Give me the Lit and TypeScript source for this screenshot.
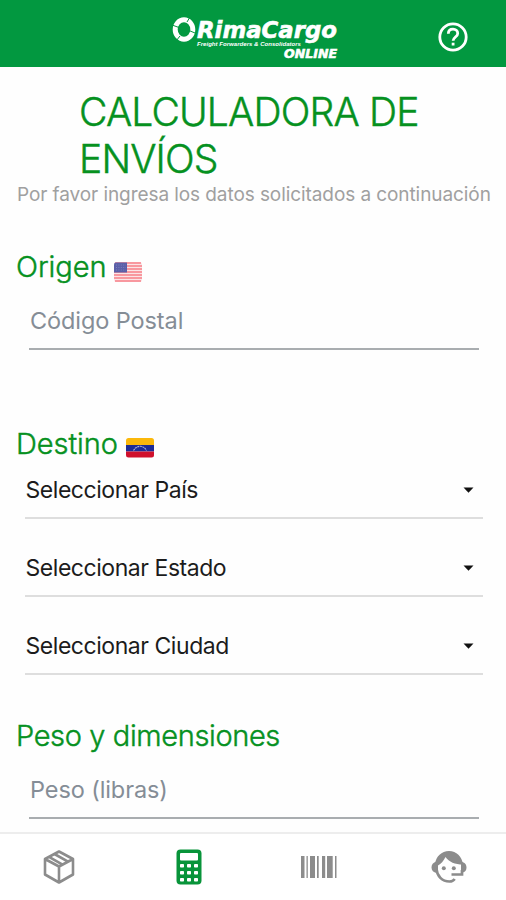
import { LitElement, html, svg, css } from "lit";
import { customElement, property } from "lit/decorators.js";

@customElement("brand-logo")
class BrandLogo extends LitElement {
  static styles = css`
    :host { display: block; width: 174px; height: 50px; }
    svg { display: block; overflow: visible; }
    text { fill: #fff; font-family: "DejaVu Sans", sans-serif; font-weight: 700; font-style: italic; }
    .name { font-size: 23.5px; stroke: #fff; stroke-width: 0.6; }
    .tag { font-size: 5.8px; font-family: "Liberation Sans", sans-serif; }
    .online { font-size: 12.5px; stroke: #fff; stroke-width: 0.6; }
  `;
  render() {
    return html`<svg width="174" height="50" viewBox="0 0 174 50">
      <ellipse cx="18" cy="17.5" rx="8.8" ry="9.8" fill="none" stroke="#fff" stroke-width="5" />
      <path d="M6 13l7 2.5M24 5l-3 5M29 21l-6-2.5M10 29l4-5" stroke="#029840" stroke-width="1" fill="none" />
      <text class="name" x="31" y="26" textLength="140" lengthAdjust="spacingAndGlyphs">RimaCargo</text>
      <text class="tag" x="31" y="33.5" textLength="104" lengthAdjust="spacingAndGlyphs">Freight Forwarders &amp; Consolidators</text>
      <text class="online" x="118" y="46" textLength="53" lengthAdjust="spacingAndGlyphs">ONLINE</text>
    </svg>`;
  }
}

@customElement("select-row")
class SelectRow extends LitElement {
  @property() label = "";
  static styles = css`
    :host {
      display: flex; align-items: center; justify-content: space-between;
      box-sizing: border-box; height: 58px; margin: 0 23px 20px 25px; padding: 2px 9px 0 0.5px;
      border-bottom: 2px solid #dedede; color: #1c1c1c; font-size: 23px; letter-spacing: -0.45px;
    }
    svg { display: block; }
  `;
  render() {
    return html`<span>${this.label}</span>
      <svg width="11" height="6" viewBox="0 0 11 6"><path d="M.5 .5h10L5.5 5.7z" fill="#111" /></svg>`;
  }
}

const usaFlag = svg`
  <rect width="28" height="20" rx="2.5" fill="#fbe4e6" />
  <path d="M1 1h26M0 4h28M0 7h28M0 10h28M0 13h28M0 16h28M1 19h26" stroke="#f87f88" stroke-width="1.5" />
  <path d="M0 2.5Q0 .5 2 .5H13V10.5H0z" fill="#5b5fa8" />
  <path d="M2 3h10M2 5.5h10M2 8h10" stroke="#8488c0" stroke-width=".8" stroke-dasharray="1 1.4" />`;

const venezuelaFlag = svg`
  <path d="M0 7V2.5Q0 0 2.5 0h23Q28 0 28 2.5V7z" fill="#fbb80b" />
  <path d="M0 7h28v6.5H0z" fill="#1c2c96" />
  <path d="M0 13.5h28V17q0 2.500-2.500 2.500h-23Q0 19.500 0 17z" fill="#d0102c" />
  <path d="M7.5 12.500Q10 8.500 14 8.300T20.500 12.500" fill="none" stroke="#a9b4dc" stroke-width="1.1" stroke-dasharray="2 .6" />`;

@customElement("app-root")
class AppRoot extends LitElement {
  static styles = css`
    :host {
      display: flex; flex-direction: column; height: 900px; overflow: hidden;
      background: #fefefe; font-family: Inter, "Noto Sans", sans-serif; font-weight: 400;
    }
    svg { display: block; }
    header {
      display: grid; grid-template-columns: 1fr 174px 1fr; flex: none;
      height: 67px; padding-top: 12px; box-sizing: border-box; background: #029840;
    }
    brand-logo { grid-column: 2; }
    .help { justify-self: end; margin: 9px 37px 0 0; }
    main { flex: 1; min-height: 0; overflow: hidden; }
    h1, h2 { color: #06911f; font-weight: 300; -webkit-text-stroke: 0.45px #06911f; }
    h1 {
      margin: 21px 0 0 79px; width: 360px;
      font-size: 39px; line-height: 47px; letter-spacing: -0.83px;
    }
    .intro {
      margin: 1px 0 0 17px; white-space: nowrap; color: #a0a0a0;
      font-size: 19px; line-height: 24px; letter-spacing: -0.08px;
    }
    h2 {
      display: flex; align-items: center; gap: 7px; height: 36px; margin: 0 0 0 16px;
      font-size: 29px; line-height: 36px; letter-spacing: -0.05px;
    }
    h2 svg { margin-top: 10px; }
    .origin { margin-top: 42px; }
    .destination { margin-top: 76px; }
    .destination svg { margin: 8px 0 0 1px; }
    .weight { margin-top: 23px; letter-spacing: -0.37px; }
    .field {
      height: 65px; box-sizing: border-box; margin: 0 27px 0 29px; padding: 20px 0 0 1px;
      border-bottom: 2px solid #a9adb0; color: #858d96; font-size: 23.5px; line-height: 32px;
      letter-spacing: -0.1px;
    }
    .selects { display: flex; flex-direction: column; margin-top: -1px; }
    nav {
      display: grid; grid-template-columns: 118px 142px 117px 1fr; align-items: center; justify-items: center;
      flex: none; height: 68px; box-sizing: border-box; border-top: 2px solid #ededed; background: #fff;
    }
    .agent { margin-left: 15px; }
  `;

  render() {
    return html`
      <header>
        <brand-logo></brand-logo>
        <svg class="help" width="32" height="32" viewBox="0 0 32 32" fill="none" stroke="#fff" stroke-width="2.8">
          <circle cx="16" cy="16" r="13.2" />
          <path d="M11.300 12.800c.1-3 2-4.600 4.700-4.600s4.700 1.700 4.700 4.200c0 3.400-4.600 3.800-4.600 7.400" />
          <path d="M14.700 23.100h2.800" />
        </svg>
      </header>
      <main>
        <h1>CALCULADORA DE ENVÍOS</h1>
        <p class="intro">Por favor ingresa los datos solicitados a continuación</p>
        <h2 class="origin"><span>Origen</span><svg width="28" height="20">${usaFlag}</svg></h2>
        <div class="field">Código Postal</div>
        <h2 class="destination"><span>Destino</span><svg width="28" height="20">${venezuelaFlag}</svg></h2>
        <div class="selects">
          ${["País", "Estado", "Ciudad"].map((n) => html`<select-row label="Seleccionar ${n}"></select-row>`)}
        </div>
        <h2 class="weight">Peso y dimensiones</h2>
        <div class="field">Peso (libras)</div>
      </main>
      <nav>
        <svg width="32" height="36" viewBox="0 0 32 36" fill="none" stroke="#8c8c8c" stroke-width="2.6" stroke-linejoin="round">
          <path d="M16 2.500L30 10v15.500L16 33.500 2 25.500V10zM2 10l14 7.500L30 10M16 17.500v16M11.500 5l13.500 7.700M6 7.900l13.500 7.700" />
        </svg>
        <svg width="26" height="36" viewBox="0 0 26 36">
          <rect x=".5" y=".5" width="25" height="35" rx="4" fill="#08943a" />
          <rect x="4" y="4" width="18" height="7.5" rx="1" fill="#fff" />
          ${[15, 22, 29].map((y) => [4, 11, 18].map((x) => svg`<rect x=${x} y=${y} width="4" height="3.6" rx=".8" fill="#fff" />`))}
        </svg>
        <svg width="36" height="22" viewBox="0 0 36 22" fill="#8c8c8c">
          <path d="M0 0h3.500v22H0zM5.500 0h1.300v22H5.500zM9 0h5v22H9zM16 0h1.700v22H16zM21 0h3.200v22H21zM26 0h5.700v22H26zM34 0h1.500v22H34z" />
        </svg>
        <svg class="agent" width="36" height="34" viewBox="0 0 36 34">
          <path d="M4 14C5 6.500 10.500 1 18 1S31 6.500 32 14.500C24 14.500 18 12 14.500 7 12.500 11 10 14 7 15.500V20H4z" fill="#8c8c8c" />
          <path d="M5.500 11.500C2 12.500.5 14.500.5 17.500s2 5 5 5.500zM30 11.500c4 1 5.500 3 5.500 6s-1.500 4.500-4 5l-1.500 1.500z" fill="#8c8c8c" />
          <path d="M5.500 19c.5 7 5.500 12.500 13 12.500 2 0 4-.8 5.200-2.500M31 20v4.500H20.500" fill="none" stroke="#8c8c8c" stroke-width="2.7" />
          <circle cx="12.8" cy="18.2" r="2" fill="#8c8c8c" /><circle cx="22.8" cy="18.2" r="2" fill="#8c8c8c" />
        </svg>
      </nav>`;
  }
}
